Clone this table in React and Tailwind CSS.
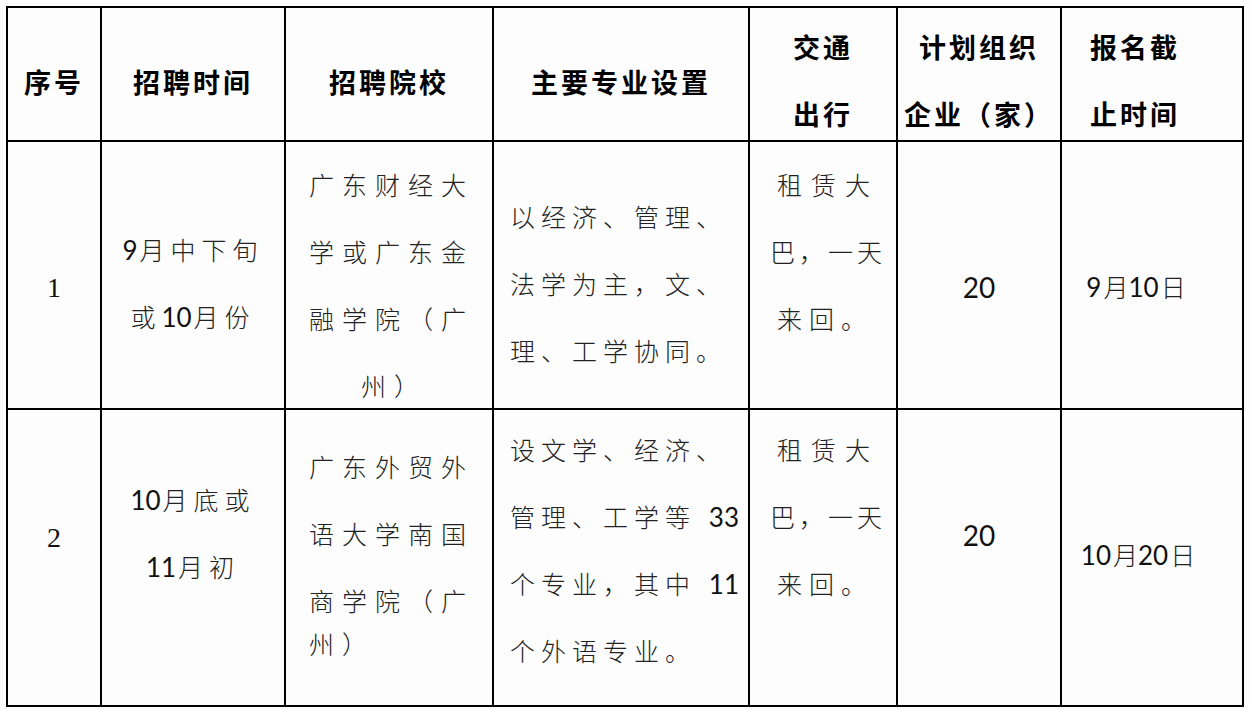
import React from 'react';

const cjk = { fontFamily: '"Lato", "Noto Sans CJK SC", sans-serif' };
const serif = { fontFamily: '"Liberation Serif", "Noto Sans CJK SC", serif' };

// digits sit tight and a bit darker than the CJK around them
function Txt({ text }) {
    return text.split(/(\d+)/).map((part, i) =>
        /^\d+$/.test(part) ? (
            <span key={i} className="tracking-normal font-normal text-[26px] text-[#111] mr-[2px]">{part}</span>
        ) : (
            <span key={i}>{part}</span>
        )
    );
}

function Cell({ className = '', children, style }) {
    return (
        <div className={'bg-[#fdfdfd] leading-[67px] whitespace-nowrap ' + className} style={style || cjk}>
            {children}
        </div>
    );
}

function Head({ className = '', lines }) {
    return (
        <Cell className={'text-[27px] font-semibold text-black tracking-[3px] ' + className}>
            {lines.map((l) => (
                <div key={l}>{l}</div>
            ))}
        </Cell>
    );
}

function Body({ className = '', lines, last }) {
    return (
        <Cell className={'text-[25px] font-light text-[#222] ' + className}>
            {lines.map((l, i) => (
                <div key={i} className={Array.isArray(l) ? l[1] : ''}>
                    <Txt text={Array.isArray(l) ? l[0] : l} />
                </div>
            ))}
            {last}
        </Cell>
    );
}

export default function App() {
    return (
        <div className="w-[1250px] h-[710px] bg-[#fdfdfd] pl-[6px] pt-[6px]">
            <div className="grid grid-cols-[92px_182px_206px_254px_146px_162px_180px] grid-rows-[132px_266px_295px] gap-[2px] p-[2px] bg-black w-fit">
                {/* header */}
                <Head className="pt-[41px] text-center" lines={['序号']} />
                <Head className="pt-[41px] text-center" lines={['招聘时间']} />
                <Head className="pt-[41px] text-center" lines={['招聘院校']} />
                <Head className="pt-[41px] text-center" lines={['主要专业设置']} />
                <Head className="pt-[6px] text-center" lines={['交通', '出行']} />
                <Head className="pt-[6px] text-center tracking-[2px]" lines={['计划组织', '企业（家）']} />
                <Head className="pt-[6px] pl-[28px]" lines={['报名截', '止时间']} />

                {/* row 1 */}
                <Cell className="pt-[112px] text-center text-[28px] text-[#111]" style={serif}>1</Cell>
                <Body className="pt-[75px] text-center tracking-[6px]" lines={['9月中下旬', '或10月份']} />
                <Body
                    className="pt-[10px] pl-[23px] tracking-[8px]"
                    lines={['广东财经大', '学或广东金', '融学院（广']}
                    last={<div className="pl-[52px]">州）</div>}
                />
                <Body className="pt-[42px] pl-[16px] tracking-[6px]" lines={['以经济、管理、', '法学为主，文、', '理、工学协同。']} />
                <Body className="pt-[10px] pl-[20px] tracking-[4px]" lines={[['租赁大', 'pl-[7px] tracking-[9px]'], '巴，一天', ['来回。', 'pl-[7px] tracking-[7px]']]} />
                <Cell className="pt-[112px] text-center text-[28px] text-[#111]">20</Cell>
                <Body className="pt-[112px] pr-[32px] text-center" lines={['9月10日']} />

                {/* row 2 */}
                <Cell className="pt-[94px] text-center text-[28px] text-[#111]" style={serif}>2</Cell>
                <Body className="pt-[57px] text-center tracking-[6px]" lines={['10月底或', '11月初']} />
                <Body
                    className="pt-[24px] pl-[23px] tracking-[8px]"
                    lines={['广东外贸外', '语大学南国', '商学院（广']}
                    last={<div className="-mt-[24px]">州）</div>}
                />
                <Body className="pt-[7px] pl-[16px] tracking-[6px]" lines={['设文学、经济、', '管理、工学等 33', '个专业，其中 11', '个外语专业。']} />
                <Body className="pt-[7px] pl-[20px] tracking-[4px]" lines={[['租赁大', 'pl-[7px] tracking-[9px]'], '巴，一天', ['来回。', 'pl-[7px] tracking-[7px]']]} />
                <Cell className="pt-[92px] text-center text-[28px] text-[#111]">20</Cell>
                <Body className="pt-[112px] pr-[28px] text-center" lines={['10月20日']} />
            </div>
        </div>
    );
}
